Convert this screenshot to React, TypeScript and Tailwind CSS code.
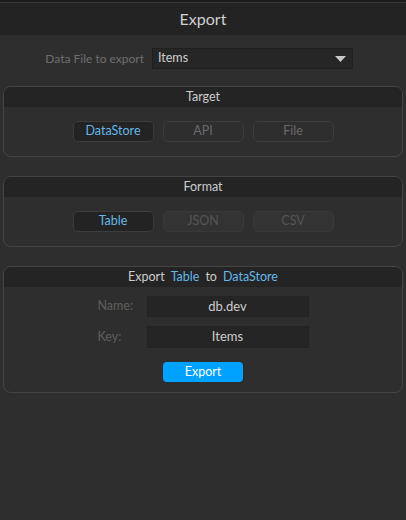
import React from 'react';

const font = { fontFamily: '"Source Sans Pro", Lato, "Noto Sans", sans-serif' };

function Panel({ title, children }: { title: React.ReactNode; children: React.ReactNode }) {
  return (
    <div className="mx-[3px] w-[400px] rounded-[8px] border border-[#444444] bg-[#2e2e2e] overflow-hidden">
      <div className="h-[20px] pt-[1px] bg-[#242424] flex items-center justify-center text-[12.5px] text-[#cccccc]">
        {title}
      </div>
      {children}
    </div>
  );
}

function Choice({ label, state }: { label: string; state: 'on' | 'off' | 'disabled' }) {
  const cls =
    state === 'on'
      ? 'bg-[#232323] border-[#3c3c3c] text-[#64b8ea]'
      : state === 'off'
        ? 'bg-[#2e2e2e] border-[#3c3c3c] text-[#6a6a6a]'
        : 'bg-[#333333] border-[#393939] text-[#555555]';
  return (
    <div className={`w-[81px] h-[21px] rounded-[5px] border flex items-center justify-center text-[12.5px] ${cls}`}>
      {label}
    </div>
  );
}

export default function App() {
  return (
    <div className="w-[406px] h-[520px] bg-[#2e2e2e] flex flex-col" style={font}>
      {/* top edge */}
      <div className="h-[2px] bg-[#1c1c1c]" />
      <div className="h-[1px] bg-[#3a3a3a]" />
      <div className="h-[32px] bg-[#232323] flex items-center justify-center text-[16px] text-[#d0d0d0]">
        Export
      </div>

      {/* file picker */}
      <div className="mt-[13px] flex items-center gap-[8px]">
        <span className="ml-[44px] w-[100px] text-right whitespace-nowrap text-[12px] text-[#6e6e6e]">Data File to export</span>
        <div className="w-[201px] h-[21px] bg-[#262626] border border-[#1f1f1f] flex items-center justify-between pl-[5px] pr-[6px] text-[12.5px] text-[#d0d0d0]">
          <span>Items</span>
          <svg width="11" height="6" viewBox="0 0 11 6">
            <path d="M0 0h11L5.5 6z" fill="#c8c8c8" />
          </svg>
        </div>
      </div>

      <div className="mt-[17px]">
        <Panel title="Target">
          <div className="flex justify-center gap-[9px] pt-[14px] pb-[14px]">
            <Choice label="DataStore" state="on" />
            <Choice label="API" state="off" />
            <Choice label="File" state="off" />
          </div>
        </Panel>
      </div>

      <div className="mt-[19px]">
        <Panel title="Format">
          <div className="flex justify-center gap-[9px] pt-[14px] pb-[14px]">
            <Choice label="Table" state="on" />
            <Choice label="JSON" state="disabled" />
            <Choice label="CSV" state="disabled" />
          </div>
        </Panel>
      </div>

      <div className="mt-[19px]">
        <Panel
          title={
            <span className="flex gap-[6px]">
              <span>Export</span>
              <span className="text-[#64b8ea]">Table</span>
              <span>to</span>
              <span className="text-[#64b8ea]">DataStore</span>
            </span>
          }
        >
          <div className="flex flex-col items-center pt-[9px] pb-[10px]">
            <div className="grid grid-cols-[49px_162px] gap-y-[9px] items-center">
              <span className="text-[12.5px] text-[#5e5e5e]">Name:</span>
              <div className="h-[21px] bg-[#252525] border border-[#232323] flex items-center justify-center text-[13px] text-[#cccccc]">
                db.dev
              </div>
              <span className="text-[12.5px] text-[#5e5e5e]">Key:</span>
              <div className="h-[22px] bg-[#252525] border border-[#232323] flex items-center justify-center text-[13px] text-[#cccccc]">
                Items
              </div>
            </div>
            <button className="mt-[14px] w-[80px] h-[20px] rounded-[4px] bg-[#00a2ff] text-white text-[12.5px] flex items-center justify-center">
              Export
            </button>
          </div>
        </Panel>
      </div>
    </div>
  );
}
